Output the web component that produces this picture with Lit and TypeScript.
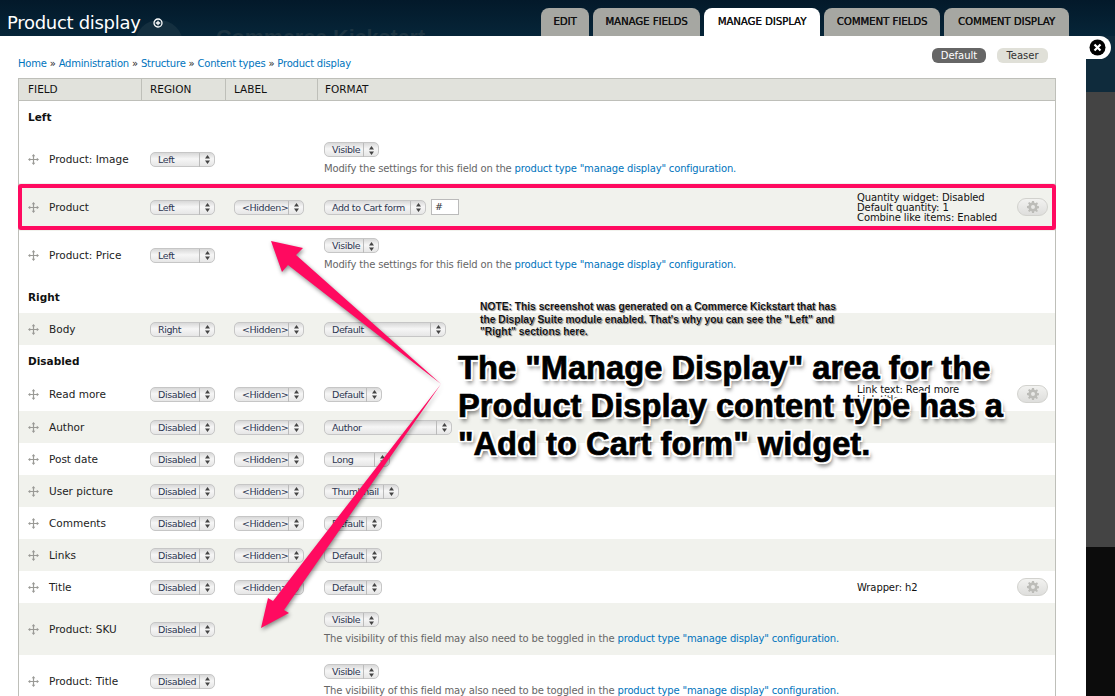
import { LitElement, html, css, svg } from 'lit';
import { customElement } from 'lit/decorators.js';

interface FieldRow {
  name: string;
  h: number;
  region: string;
  label?: boolean;
  format?: string;
  formatW?: number;
  desc?: 'modify' | 'visibility';
  input?: boolean;
  summary?: string[];
  gear?: boolean;
  striped?: boolean;
  pad?: number;
  nudge?: number;
}

type Row = FieldRow | { heading: string; h: number; top: number };

const ROWS: Row[] = [
  { heading: 'Left', h: 34, top: 0 },
  { name: 'Product: Image', h: 48, region: 'Left', format: 'Visible', formatW: 55, desc: 'modify', pad: 7 },
  {
    name: 'Product', h: 48, region: 'Left', label: true, format: 'Add to Cart form', formatW: 102, input: true,
    summary: ['Quantity widget: Disabled', 'Default quantity: 1', 'Combine like items: Enabled'], gear: true, striped: true,
  },
  { name: 'Product: Price', h: 48, region: 'Left', format: 'Visible', formatW: 55, desc: 'modify', pad: 7 },
  { heading: 'Right', h: 34, top: 3 },
  { name: 'Body', h: 32, region: 'Right', label: true, format: 'Default', formatW: 122, striped: true },
  { heading: 'Disabled', h: 33, top: 0 },
  { name: 'Read more', h: 33, nudge: 1, region: 'Disabled', label: true, format: 'Default', formatW: 58, summary: ['Link text: Read more', 'Link title:'], gear: true },
  { name: 'Author', h: 32, region: 'Disabled', label: true, format: 'Author', formatW: 128, striped: true },
  { name: 'Post date', h: 32, region: 'Disabled', label: true, format: 'Long', formatW: 66 },
  { name: 'User picture', h: 32, region: 'Disabled', label: true, format: 'Thumbnail', formatW: 75, striped: true },
  { name: 'Comments', h: 32, region: 'Disabled', label: true, format: 'Default', formatW: 58 },
  { name: 'Links', h: 32, region: 'Disabled', label: true, format: 'Default', formatW: 58, striped: true },
  { name: 'Title', h: 32, region: 'Disabled', label: true, format: 'Default', formatW: 58, summary: ['Wrapper: h2'], gear: true },
  { name: 'Product: SKU', h: 52, region: 'Disabled', format: 'Visible', formatW: 55, desc: 'visibility', pad: 9, striped: true },
  { name: 'Product: Title', h: 52, region: 'Disabled', format: 'Visible', formatW: 55, desc: 'visibility', pad: 9 },
];

const TABS = [
  { label: 'Edit', w: 48 },
  { label: 'Manage fields', w: 107 },
  { label: 'Manage display', w: 116, active: true },
  { label: 'Comment fields', w: 116 },
  { label: 'Comment display', w: 125 },
];

@customElement('app-root')
export class AppRoot extends LitElement {
  static styles = css`
    :host {
      display: block;
      position: relative;
      width: 1115px;
      height: 696px;
      overflow: hidden;
      font-family: 'DejaVu Sans', sans-serif;
      font-size: 10.5px;
      color: #222;
      background: #fff;
    }
    a {
      color: #0074bd;
      text-decoration: none;
    }

    /* top bar */
    .top {
      position: relative;
      height: 36px;
      background: linear-gradient(#03192a, #062538);
      display: flex;
      justify-content: space-between;
      overflow: hidden;
    }
    .title {
      display: flex;
      align-items: center;
      gap: 13px;
      padding: 8px 0 0 7px;
      font-size: 18px;
      letter-spacing: -0.3px;
      color: #fff;
      position: relative;
    }
    .title svg {
      margin-top: 1px;
    }
    .ghost {
      position: absolute;
      left: 216px;
      top: 26px;
      font: bold 21.500px 'Liberation Sans', sans-serif;
      color: #1c3442;
      white-space: nowrap;
    }
    .ghost-disc {
      position: absolute;
      left: 135px;
      top: 20px;
      width: 48px;
      height: 48px;
      border-radius: 50%;
      background: #142f3f;
    }
    .tabs {
      display: flex;
      gap: 4px;
      padding: 8px 46px 0 0;
      position: relative;
    }
    .tab {
      height: 28px;
      box-sizing: border-box;
      display: flex;
      align-items: center;
      justify-content: center;
      background: #a6a7a2;
      border-radius: 8px 8px 0 0;
      font-size: 10.100px;
      text-transform: uppercase;
      color: #111;
      padding-bottom: 2px;
      white-space: nowrap;
      text-shadow: 0.3px 0 0 #111;
    }
    .tab.active {
      background: #fff;
    }

    /* body */
    .main {
      display: flex;
      height: 660px;
    }
    .panel {
      width: 1086px;
      flex: none;
      box-sizing: border-box;
      background: #fff;
      padding: 0 30px 0 18px;
      overflow: hidden;
    }
    .strip {
      flex: 1;
      display: flex;
      flex-direction: column;
    }
    .strip .navy {
      height: 56px;
      background: #0f2b3c;
    }
    .strip .grey {
      height: 455px;
      background: #444;
    }
    .strip .black {
      flex: 1;
      background: #0c0c0c;
    }
    .crumbs-bar {
      height: 42px;
      display: flex;
      justify-content: space-between;
      box-sizing: border-box;
      padding: 12px 8px 0 0;
    }
    .crumbs {
      padding-top: 10px;
      font-size: 10px;
      letter-spacing: -0.2px;
      white-space: nowrap;
    }
    .pills {
      display: flex;
      gap: 11px;
    }
    .pill {
      height: 15px;
      border-radius: 6px;
      display: flex;
      align-items: center;
      justify-content: center;
      font-size: 10px;
      background: #e0e0d8;
      color: #333;
    }
    .pill.on {
      background: #666;
      color: #fff;
    }

    /* table */
    .table {
      border: 1px solid #bebfb9;
      border-bottom: 0;
    }
    .thead {
      display: grid;
      grid-template-columns: 122px 84px 92px 1fr;
      height: 21px;
      background: #e1e2dc;
      border-bottom: 1px solid #bebfb9;
      font-size: 10.5px;
      color: #111;
    }
    .thead div {
      display: flex;
      align-items: center;
      padding: 0 0 1px 8px;
      border-left: 1px solid #bebfb9;
    }
    .thead div:first-child {
      border-left: 0;
      padding-left: 9px;
    }
    .thead div:last-child {
      padding-left: 7px;
    }
    .section {
      display: flex;
      align-items: center;
      padding: 0 0 2px 9px;
      box-sizing: border-box;
      font-weight: bold;
      font-size: 10.5px;
      color: #111;
    }
    .row {
      display: grid;
      grid-template-columns: 131px 84px 90px 533px 160px 1fr;
      align-items: center;
      box-sizing: border-box;
    }
    .row.striped {
      background: #f1f2ed;
    }
    .name {
      display: flex;
      align-items: center;
      gap: 10px;
      padding-left: 9px;
      font-size: 10.5px;
      color: #222;
      white-space: nowrap;
    }
    .fmt {
      align-self: start;
      height: 100%;
      display: flex;
      flex-direction: column;
      justify-content: center;
      align-items: flex-start;
    }
    .fmt.stack {
      justify-content: flex-start;
    }
    .inline {
      display: flex;
      align-items: center;
      gap: 5px;
    }
    .desc {
      margin-top: 6px;
      font-size: 10px;
      letter-spacing: -0.16px;
      line-height: 12px;
      color: #666;
      white-space: nowrap;
    }
    .sel {
      display: inline-grid;
      grid-template-columns: 1fr 15px;
      height: 15px;
      box-sizing: border-box;
      border: 1px solid #c6c6c6;
      border-radius: 5px;
      background: linear-gradient(#d8d8d8, #f6f6f6 45%, #e6e6e6);
      font-size: 9.5px;
      letter-spacing: -0.4px;
      color: #2c3550;
      line-height: 14px;
      white-space: nowrap;
    }
    .sel span {
      padding-left: 7px;
      overflow: visible;
      min-width: 0;
    }
    .sel i {
      display: flex;
      align-items: center;
      justify-content: center;
      border-left: 1px solid #bbb;
    }
    .qty {
      width: 28px;
      height: 16px;
      box-sizing: border-box;
      border: 1px solid #bbb;
      background: #fff;
      padding-left: 3px;
      font-size: 9.5px;
      line-height: 14px;
      color: #333;
    }
    .summary {
      padding-top: 1px;
      font-size: 10px;
      line-height: 10px;
      color: #111;
      letter-spacing: -0.1px;
      white-space: nowrap;
      max-height: 30px;
    }
    .gear {
      width: 31px;
      height: 18px;
      display: flex;
      align-items: center;
      justify-content: center;
      box-sizing: border-box;
      border: 1px solid #d2d2ce;
      border-radius: 9px;
      background: linear-gradient(#f2f2f0, #dededc);
    }

    /* overlays */
    .redbox {
      position: absolute;
      left: 18px;
      top: 184px;
      width: 1038px;
      height: 46px;
      box-sizing: border-box;
      border: 4px solid #ff0a60;
      border-radius: 3px;
    }
    .arrows {
      position: absolute;
      left: 0;
      top: 0;
      filter: drop-shadow(1px 2px 2px rgba(0, 0, 0, 0.45));
    }
    .note {
      position: absolute;
      left: 480px;
      top: 301px;
      font: bold 10.25px/12.5px 'Liberation Sans', sans-serif;
      color: #111;
      white-space: nowrap;
      text-shadow: 0 0 1px #fff, 1px 1px 1px rgba(0, 0, 0, 0.55);
    }
    .callout {
      position: absolute;
      left: 458px;
      top: 349px;
      font: bold 32.7px/38px 'Liberation Sans', sans-serif;
      color: #000;
      -webkit-text-stroke: 0.7px #000;
      white-space: nowrap;
      text-shadow: 2px 0 0 #fff, -2px 0 0 #fff, 0 2px 0 #fff, 0 -2px 0 #fff,
        2px 2px 0 #fff, -2px 2px 0 #fff, 2px -2px 0 #fff, -2px -2px 0 #fff,
        2px 4px 4px rgba(0, 0, 0, 0.6);
    }
    .close {
      position: absolute;
      left: 1086px;
      top: 36px;
      width: 25px;
      height: 23px;
      background: #fff;
      border-radius: 0 12px 12px 0;
      display: flex;
      align-items: center;
      justify-content: flex-end;
      padding-right: 5px;
      box-sizing: border-box;
    }
  `;

  private arrowsIcon() {
    return svg`<svg width="9" height="11" viewBox="0 0 9 11"><path d="M4.5 1 7 4.5H2zM4.5 10 2 6.5h5z" fill="#444"/></svg>`;
  }

  private dragIcon() {
    return svg`<svg width="11" height="11" viewBox="0 0 11 11" style="flex:none"><path d="M5.5 0 7.3 2.2H6.1V4.9H8.8V3.7L11 5.5 8.8 7.3V6.1H6.1V8.8H7.3L5.5 11 3.7 8.8H4.9V6.1H2.2V7.3L0 5.5 2.2 3.7V4.9H4.9V2.2H3.7z" fill="#9a9a96"/></svg>`;
  }

  private gearIcon() {
    return svg`<svg width="12" height="12" viewBox="0 0 12 12"><path fill="#bcbcb8" fill-rule="evenodd" d="M5 0h2l.3 1.7 1.2.5L10 1.2 11 2.7 9.9 4l.4 1.1L12 5.3v1.9l-1.7.3-.4 1.1L11 9.9 9.7 11 8.3 9.9l-1 .4L7 12H5l-.3-1.7-1.1-.4L2.3 11 1 9.700 2.100 8.500l-.5-1.100L0 7V5l1.600-.3.500-1.100L1 2.300 2.300 1l1.300 1.100 1.100-.5zM6 4a2 2 0 1 0 0 4 2 2 0 0 0 0-4z"/></svg>`;
  }

  private select(text: string, w: number) {
    return html`<div class="sel" style="width:${w}px"><span>${text}</span><i>${this.arrowsIcon()}</i></div>`;
  }

  private renderDesc(kind: 'modify' | 'visibility') {
    const lead = kind === 'modify'
      ? 'Modify the settings for this field on the'
      : 'The visibility of this field may also need to be toggled in the';
    return html`<div class="desc">${lead} <a>product type "manage display" configuration.</a></div>`;
  }

  private renderRow(r: Row) {
    if ('heading' in r) {
      return html`<div class="section" style="height:${r.h}px;padding-top:${r.top}px">${r.heading}</div>`;
    }
    const stackStyle = r.pad ? `padding-top:${r.pad}px` : '';
    return html`
      <div class="row ${r.striped ? 'striped' : ''}" style="height:${r.h}px;padding-bottom:${r.nudge ?? 0}px">
        <div class="name">${this.dragIcon()}<span>${r.name}</span></div>
        <div>${this.select(r.region, 65)}</div>
        <div>${r.label ? this.select('<Hidden>', 70) : ''}</div>
        <div class="fmt ${r.desc ? 'stack' : ''}" style=${stackStyle}>
          <div class="inline">
            ${this.select(r.format ?? '', r.formatW ?? 58)}
            ${r.input ? html`<div class="qty">#</div>` : ''}
          </div>
          ${r.desc ? this.renderDesc(r.desc) : ''}
        </div>
        <div class="summary">${(r.summary ?? []).map((l) => html`<div>${l}</div>`)}</div>
        <div>${r.gear ? html`<div class="gear">${this.gearIcon()}</div>` : ''}</div>
      </div>
    `;
  }

  render() {
    return html`
      <div class="top">
        <div class="ghost-disc"></div>
        <div class="ghost">Commerce Kickstart</div>
        <div class="title">
          <span>Product display</span>
          <svg width="10" height="10" viewBox="0 0 10 10">
            <circle cx="5" cy="5" r="4" fill="none" stroke="#fff" stroke-width="1.300" />
            <path d="M5 2.800v4.400M2.800 5h4.400" stroke="#fff" stroke-width="1.300" />
          </svg>
        </div>
        <div class="tabs">
          ${TABS.map((t) => html`<div class="tab ${t.active ? 'active' : ''}" style="width:${t.w}px">${t.label}</div>`)}
        </div>
      </div>

      <div class="main">
        <div class="panel">
          <div class="crumbs-bar">
            <div class="crumbs">
              <a>Home</a> » <a>Administration</a> » <a>Structure</a> » <a>Content types</a> » <a>Product display</a>
            </div>
            <div class="pills">
              <div class="pill on" style="width:54px">Default</div>
              <div class="pill" style="width:51px">Teaser</div>
            </div>
          </div>
          <div class="table">
            <div class="thead"><div>FIELD</div><div>REGION</div><div>LABEL</div><div>FORMAT</div></div>
            ${ROWS.map((r) => this.renderRow(r))}
          </div>
        </div>
        <div class="strip">
          <div class="navy"></div>
          <div class="grey"></div>
          <div class="black"></div>
        </div>
      </div>

      <div class="redbox"></div>
      <svg class="arrows" width="1115" height="696" viewBox="0 0 1115 696">
        <polygon fill="#ff0a60" points="441,384 296,255 303,248 271,241 282,272 288,265" />
        <polygon fill="#ff0a60" points="441,384 273,601 268,598 261,628 289,613 284,610" />
      </svg>
      <div class="note">
        NOTE: This screenshot was generated on a Commerce Kickstart that has<br />
        the Display Suite module enabled. That's why you can see the "Left" and<br />
        "Right" sections here.
      </div>
      <div class="callout">
        The "Manage Display" area for the<br />
        Product Display content type has a<br />
        "Add to Cart form" widget.
      </div>
      <div class="close">
        <svg width="17" height="17" viewBox="0 0 17 17">
          <circle cx="8.500" cy="8.500" r="8" fill="#000" />
          <path d="M5.500 5.500l6 6M11.500 5.500l-6 6" stroke="#fff" stroke-width="2.200" />
        </svg>
      </div>
    `;
  }
}

declare global {
  interface HTMLElementTagNameMap {
    'app-root': AppRoot;
  }
}
